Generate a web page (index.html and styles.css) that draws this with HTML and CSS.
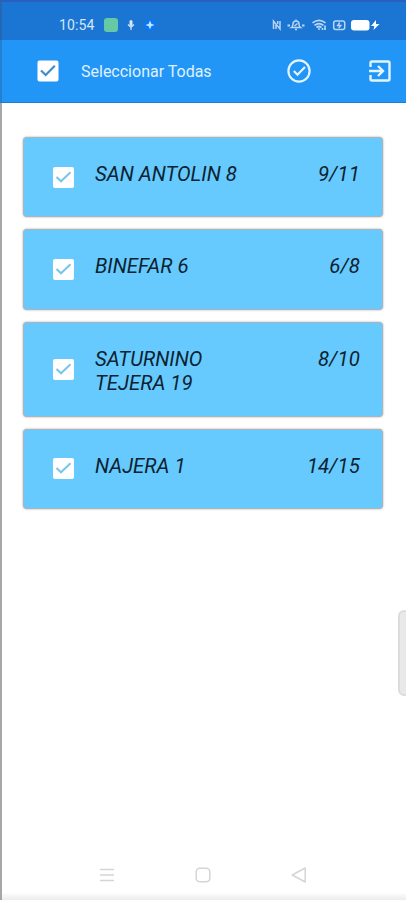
FILE: index.html
```html
<!DOCTYPE html>
<html lang="es">
<head>
    <meta charset="utf-8"/>
    <meta name="viewport" content="width=device-width, initial-scale=1.0"/>
    <title>Seleccionar Todas</title>
    <link rel="stylesheet" href="styles.css">
</head>
<body>
<div class="screen">
    <div class="status-bar">
        <div class="status-left">
            <span class="clock">10:54</span>
            <span class="app-badge"></span>
            <svg class="icon-mic" width="8" height="12" viewBox="0 0 8 12">
                <rect x="2.5" y="1" width="3" height="6" rx="1.5" fill="#d5e6f8"/>
                <path d="M1 5.5L4 8.5L7 5.5M4 8v3" fill="none" stroke="#d5e6f8" stroke-width="1.2"/>
            </svg>
            <svg class="icon-spark" width="12" height="12" viewBox="0 0 12 12">
                <circle cx="6" cy="6" r="6" fill="#0878f5"/>
                <path d="M6 1.5L7.3 4.7L10.5 6L7.3 7.3L6 10.5L4.7 7.3L1.5 6L4.7 4.7Z" fill="#c5e4ff"/>
            </svg>
        </div>
        <svg width="110" height="14" viewBox="0 0 110 14" fill="none" stroke="#b9d5f3" stroke-width="1.5">
            <!-- NFC -->
            <path d="M2.500 11V3L9 11V3M5 11V7M6.700 3V6"/>
            <!-- silenciado -->
            <path d="M20.500 9.500Q22 8.500 22 6Q22 3 25 3Q28 3 28 6Q28 8.500 29.500 9.500ZM24 11.500H26M25 1.500V3M26.500 5.500L23.500 8"/>
            <path d="M16.500 7.500h2.500M31 7.500h2.500" stroke-width="2"/>
            <!-- wifi -->
            <path d="M41.500 4.800Q48 -.2 54.500 4.800M43.500 7.300Q48 3.800 52.500 7.300M45.500 9.500Q48 7.500 50.500 9.500M54 7.500v4.500M51.500 10v2" stroke-width="1.700"/>
            <circle cx="48" cy="11" r="1" fill="#b9d5f3" stroke="none"/>
            <rect x="62.700" y="3" width="11" height="8.500" rx="2"/>
            <path d="M68.700 4.500L66.700 7.500H69.700L67.700 10"/>
            <!-- batería -->
            <rect x="80" y="2" width="18.500" height="10.500" rx="3" fill="#fff" stroke="none"/>
            <path d="M105 2L100 8H103.300L102.500 12L108.500 6H105Z" fill="#fff" stroke="none"/>
        </svg>
    </div>

    <div class="app-bar">
        <svg class="check check-all" width="22" height="22" viewBox="0 0 22 22">
            <rect x=".5" y=".5" width="21" height="21" rx="2" fill="#fff"/>
            <path d="M4 10.500L8.700 15L17.800 5.800" fill="none" stroke="#3b8fcd" stroke-width="2.200"/>
        </svg>
        <span class="app-title">Seleccionar Todas</span>
        <svg class="icon-done" width="24" height="24" viewBox="0 0 24 24" fill="none" stroke="#e3f4ff" stroke-width="2.200">
            <circle cx="12" cy="12" r="10.600"/>
            <path d="M6.800 12L10.500 15.700L18 8"/>
        </svg>
        <svg class="icon-exit" width="22" height="22" viewBox="0 0 22 22" fill="none" stroke="#e3f4ff" stroke-width="2.400">
            <path d="M1.500 7V3Q1.500 1.500 3 1.500H19Q20.500 1.500 20.500 3V19Q20.500 20.500 19 20.500H3Q1.500 20.500 1.500 19V15"/>
            <path d="M0 11H14M9 6L14 11L9 16"/>
        </svg>
    </div>

    <div class="content">
        <div class="card">
            <svg class="check" width="21" height="21" viewBox="0 0 21 21">
                <rect width="21" height="21" rx="2" fill="#fff"/>
                <path d="M3.500 10L8 14.300L17.500 5.200" fill="none" stroke="#78c5ec" stroke-width="2"/>
            </svg>
            <span class="card-name">SAN ANTOLIN 8</span>
            <span class="card-count">9/11</span>
        </div>
        <div class="card">
            <svg class="check" width="21" height="21" viewBox="0 0 21 21">
                <rect width="21" height="21" rx="2" fill="#fff"/>
                <path d="M3.500 10L8 14.300L17.500 5.200" fill="none" stroke="#78c5ec" stroke-width="2"/>
            </svg>
            <span class="card-name">BINEFAR 6</span>
            <span class="card-count">6/8</span>
        </div>
        <div class="card card-tall">
            <svg class="check" width="21" height="21" viewBox="0 0 21 21">
                <rect width="21" height="21" rx="2" fill="#fff"/>
                <path d="M3.500 10L8 14.300L17.500 5.200" fill="none" stroke="#78c5ec" stroke-width="2"/>
            </svg>
            <span class="card-name">SATURNINO<br>TEJERA 19</span>
            <span class="card-count">8/10</span>
        </div>
        <div class="card">
            <svg class="check" width="21" height="21" viewBox="0 0 21 21">
                <rect width="21" height="21" rx="2" fill="#fff"/>
                <path d="M3.500 10L8 14.300L17.500 5.200" fill="none" stroke="#78c5ec" stroke-width="2"/>
            </svg>
            <span class="card-name">NAJERA 1</span>
            <span class="card-count">14/15</span>
        </div>
    </div>

    <div class="nav-bar">
        <svg width="16" height="16" viewBox="0 0 16 16" fill="none" stroke="#d5d5d5" stroke-width="1.500">
            <path d="M1 2.500H15M1 8H15M1 13.500H15"/>
        </svg>
        <svg width="16" height="16" viewBox="0 0 16 16" fill="none" stroke="#d5d5d5" stroke-width="1.500">
            <rect x="1.200" y="1.200" width="13.600" height="13.600" rx="3.500"/>
        </svg>
        <svg width="16" height="16" viewBox="0 0 16 16" fill="none" stroke="#d5d5d5" stroke-width="1.500" stroke-linejoin="round">
            <path d="M1.200 8L14.200 1V15Z"/>
        </svg>
    </div>
    <div class="side-handle"></div>
</div>
</body>
</html>
```

FILE: styles.css
```css
* {
    box-sizing: border-box;
}

body {
    margin: 0;
    font-family: Roboto, "Liberation Sans", sans-serif;
    background-color: #fff;
}

svg {
    display: block;
    flex-shrink: 0;
}

.screen {
    position: relative;
    display: flex;
    flex-direction: column;
    height: 900px;
    overflow: hidden;
}

.status-bar {
    display: flex;
    justify-content: space-between;
    align-items: center;
    height: 40px;
    padding: 8px 25px 0 59px;
    background-color: #1b75d3;
    border-top: 2px solid #2b5fbd;
    border-left: 2px solid #2467b5;
}

.status-left {
    display: flex;
    align-items: center;
    margin-left: -2px;
}

.clock {
    width: 45px;
    font-size: 14px;
    line-height: 16px;
    letter-spacing: 0.1px;
    color: #d5e6f8;
}

.app-badge {
    width: 14px;
    height: 14px;
    border-radius: 3px;
    background-color: #65c9a5;
}

.icon-mic {
    margin-left: 9px;
}

.icon-spark {
    margin-left: 9px;
}

.app-bar {
    display: flex;
    align-items: center;
    height: 63px;
    padding-left: 35px;
    background-color: #2196f6;
    border-left: 2px solid #2580d0;
    border-bottom: 1px solid #1680d2;
}

.app-title {
    width: 206px;
    margin-left: 22px;
    padding-top: 1px;
    font-size: 16px;
    color: #e0f1ff;
}

.icon-exit {
    margin-left: 58px;
}

.content {
    display: flex;
    flex-direction: column;
    gap: 12px;
    flex: 1;
    padding: 34px 23px 0 21px;
    border-left: 2px solid #a7a7a7;
}

.card {
    display: flex;
    align-items: center;
    height: 80.400px;
    padding: 0 22px 0 29px;
    background-color: #66cafe;
    border: 1px solid #a9b6bf;
    border-radius: 4px;
    box-shadow: 0 0 2px rgba(90, 80, 80, 0.6);
}

.card-tall {
    height: 95px;
}

.card-name,
.card-count {
    align-self: flex-start;
    padding-top: 24px;
    font-size: 20.400px;
    font-style: italic;
    line-height: 24px;
    color: #0c2230;
}

.card-name {
    flex: 1;
    margin-left: 21px;
}

.card-count {
    letter-spacing: 0.1px;
}

.nav-bar {
    display: flex;
    justify-content: center;
    align-items: center;
    gap: 80px;
    height: 52px;
    padding-right: 3px;
    padding-top: 1px;
    border-left: 2px solid #a7a7a7;
    background: linear-gradient(#fff 85%, #ececec);
}

/* tirador del panel lateral */
.side-handle {
    position: absolute;
    top: 610px;
    right: -4px;
    width: 12px;
    height: 86px;
    background-color: #e9e9e9;
    border: 2px solid #dcdcdc;
    border-radius: 7px;
}
```
